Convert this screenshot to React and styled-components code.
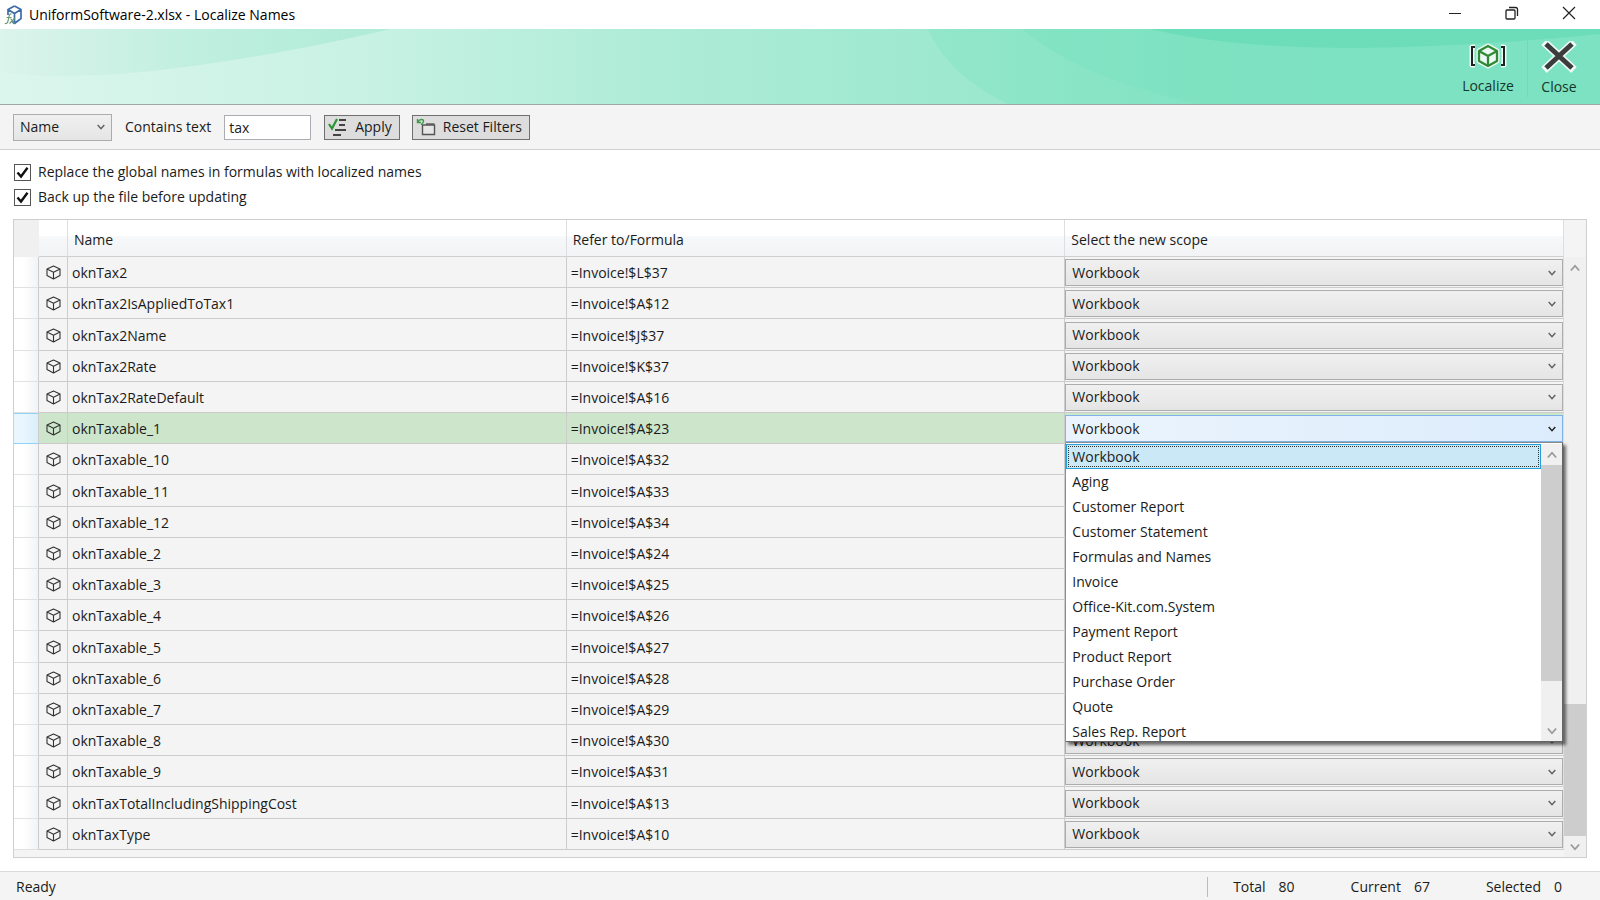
import React, { useState } from 'react'
import styled, { createGlobalStyle, css } from 'styled-components'

const GlobalStyle = createGlobalStyle`
  * {
    box-sizing: border-box;
  }
  body {
    margin: 0;
    background: #fff;
    color: #1b1b1b;
    font-family: "Open Sans", "Noto Sans", sans-serif;
    font-size: 14px;
    line-height: 20px;
  }
  button, input, select {
    font: inherit;
    color: inherit;
    margin: 0;
  }
`;

const Window = styled.div`
  display: flex;
  flex-direction: column;
  height: 100vh;
  overflow: hidden;
`;

const TitleBar = styled.header`
  display: flex;
  align-items: center;
  height: 29px;
  flex: none;
  padding: 0 3px 0 4px;
`;

const Title = styled.h1`
  flex: 1;
  margin: 0 0 0 6px;
  font-size: 14px;
  font-weight: 400;
  color: #000;
`;

const CaptionButton = styled.button`
  display: flex;
  align-items: center;
  justify-content: center;
  width: 57px;
  height: 29px;
  padding: 0 0 4px;
  border: none;
  background: transparent;
`;

const Ribbon = styled.div`
  position: relative;
  display: flex;
  justify-content: flex-end;
  align-items: center;
  height: 76px;
  flex: none;
  padding-right: 10px;
  border-bottom: 1px solid #9fa8a4;
`;

const RibbonArt = styled.svg`
  position: absolute;
  inset: 0;
  width: 100%;
  height: 100%;
`;

const RibbonButton = styled.button`
  position: relative;
  display: flex;
  flex-direction: column;
  align-items: center;
  gap: 4px;
  width: ${({ $wide }) => ($wide ? '78px' : '63px')};
  padding: 4px 0 0;
  border: none;
  background: transparent;
  color: #17362b;
  & + & {
    border-left: 1px solid #9fc4b6;
  }
`;

const FilterBar = styled.form`
  display: flex;
  align-items: center;
  height: 45px;
  flex: none;
  padding: 0 13px;
  background: #f4f4f4;
  border-bottom: 1px solid #d0d0d0;
`;

const FilterLabel = styled.label`
  margin: 0 13px;
`;

const TextBox = styled.input`
  width: 87px;
  height: 25px;
  margin-right: 13px;
  padding: 0 4px;
  border: 1px solid #abadb3;
  background: #fff;
  outline: none;
`;

const ToolButton = styled.button`
  display: flex;
  align-items: center;
  height: 25px;
  margin-right: 12px;
  padding: 0 7px 0 3px;
  gap: 7px;
  border: 1px solid #707070;
  background: #ddd;
  white-space: nowrap;
`;

const SelectBox = styled.div`
  display: grid;
  align-items: center;
  width: ${({ $width }) => $width || '100%'};
  > * {
    grid-area: 1 / 1;
  }
  svg {
    justify-self: end;
    margin-right: 7px;
    pointer-events: none;
  }
`;

const Select = styled.select`
  appearance: none;
  width: 100%;
  height: 27px;
  padding: 0 6px;
  border: 1px solid #acacac;
  border-radius: 0;
  background: linear-gradient(#f0f0f0, #e5e5e5);
  outline: none;
  ${({ $open }) => $open && css`
    border-color: #7eb4ea;
    background: linear-gradient(90deg, #ebf4fc, #dcecfc);
  `}
`;

const Options = styled.div`
  display: flex;
  flex-direction: column;
  gap: 5px;
  flex: none;
  padding: 12px 14px;
`;

const CheckLabel = styled.label`
  display: flex;
  align-items: center;
  gap: 7px;
`;

const CheckBox = styled.span`
  display: grid;
  > * {
    grid-area: 1 / 1;
  }
  input {
    appearance: none;
    width: 17px;
    height: 17px;
    border: 1px solid #555;
    background: #fff;
  }
  svg {
    pointer-events: none;
    visibility: hidden;
  }
  input:checked + svg {
    visibility: visible;
  }
`;

const GridFrame = styled.main`
  display: flex;
  flex: 1;
  min-height: 0;
  margin: 0 13px 13px;
  border: 1px solid #cfcfcf;
  background: #f4f4f4;
`;

const TableArea = styled.div`
  flex: 1;
  padding-bottom: 7px;
`;

const Table = styled.table`
  width: 100%;
  height: 100%;
  table-layout: fixed;
  border-collapse: separate;
  border-spacing: 0;
`;

const MarkCol = styled.col`
  width: 25px;
`;

const IconCol = styled.col`
  width: 29px;
`;

const HeadCell = styled.th`
  height: 37px;
  padding: 3px 6px 0;
  text-align: left;
  font-weight: 400;
  background: linear-gradient(#fff 45%, #f7f8fa 46%, #f1f3f5);
  border-right: 1px solid #dcdfe2;
  border-bottom: 1px solid #cdcfd1;
`;

const CornerCell = styled.th`
  background: #f0f0f0;
`;

const Row = styled.tr`
  background: ${({ $active }) => ($active ? '#cde6cb' : '#f4f4f4')};
`;

const Cell = styled.td`
  padding: 2px 4px 0;
  border-right: 1px solid #ccc;
  border-bottom: 1px solid #ccc;
  svg {
    display: block;
  }
`;

const MarkCell = styled(Cell)`
  background: linear-gradient(90deg, #fff 40%, #f1f3f5);
  border-bottom-color: #dfe1e3;
  ${({ $active }) => $active && css`
    background: linear-gradient(90deg, #e9f6fd 40%, #d9effb);
    border-bottom-color: #8fd3f5;
    box-shadow: inset 0 1px #8fd3f5;
  `}
`;

const IconCell = styled(Cell)`
  padding: 1px 7px 0;
`;

const ScopeCell = styled(Cell)`
  position: relative;
  padding: 1px 0 0;
  border-right-color: #dedede;
`;

const Popup = styled.div`
  position: absolute;
  z-index: 2;
  top: calc(100% - 1px);
  left: 0;
  right: 0;
  display: flex;
  height: 300px;
  padding-top: 1px;
  border: 1px solid #646464;
  background: #fff;
  box-shadow: 3px 3px 3px rgba(0, 0, 0, 0.55);
  clip-path: inset(0 -6px -6px 0);
`;

const ScopeList = styled.ul`
  flex: 1;
  margin: 0;
  padding: 0;
  overflow: hidden;
  list-style: none;
`;

const ScopeOption = styled.li`
  height: 25px;
  padding: 2px 5px 0;
  border: 1px solid transparent;
  ${({ $selected }) => $selected && css`
    background: #cbe8f6;
    border-color: #26a0da;
    outline: 1px dotted #333;
    outline-offset: -3px;
  `}
`;

const ScrollTrack = styled.div`
  display: flex;
  flex-direction: column;
  width: ${({ $width }) => $width};
  flex: none;
  background: #f0f0f0;
`;

const ScrollHead = styled.div`
  height: 37px;
  background: #f4f4f4;
`;

const ScrollButton = styled.button`
  display: flex;
  align-items: center;
  justify-content: center;
  height: 21px;
  flex: none;
  padding: 0;
  border: none;
  background: transparent;
`;

const ScrollSpace = styled.div`
  flex: ${({ $grow }) => $grow} 1 0;
`;

const ScrollThumb = styled(ScrollSpace)`
  background: #cdcdcd;
`;

const StatusBar = styled.footer`
  display: flex;
  align-items: center;
  height: 29px;
  flex: none;
  padding: 1px 38px 0 16px;
  background: #f4f4f4;
  border-top: 1px solid #dadada;
`;

const Status = styled.span`
  flex: 1;
`;

const Counts = styled.div`
  display: flex;
  gap: 56px;
  padding-left: 25px;
  border-left: 1px solid #bbb;
`;

const Count = styled.span`
  display: flex;
  gap: 13px;
`;

const Chevron = ({ up, size = 8, color = '#606060' }) => (
  <svg width={size} height={size} viewBox="0 0 8 8" fill="none" stroke={color} strokeWidth="1.4">
    <path d={up ? 'M0.7 6 4 2.2 7.3 6' : 'M0.7 2 4 5.8 7.3 2'} />
  </svg>
)

const Cube = () => (
  <svg width="15" height="15" viewBox="0 0 15 15" fill="none" stroke="#333" strokeWidth="1.1" strokeLinejoin="round">
    <path d="M7.5 1 14 4v6.6L7.5 14 1 10.6V4zM1 4l6.5 3.2L14 4M7.5 7.2V14" />
  </svg>
)

const AppIcon = () => (
  <svg width="19" height="20" viewBox="0 0 19 20" fill="none" strokeLinejoin="round">
    <path d="M10.5 1 17 4.500v9l-6.500 5-2-1.500M4 10V4.500L10.500 1M4 4.500l6.500 4 6.500-4M10.500 8.500v10" stroke="#3b6cab" strokeWidth="1.7" />
    <path d="M7.500 9C5 8 5 12.500 4 16 3.500 18.300 2.200 19 .8 18.300M2.500 12.500h5M6.500 13.500l4 5M11 13l-5.500 5.500" stroke="#6c9c74" strokeWidth="1.2" />
  </svg>
)

const LocalizeIcon = () => (
  <svg width="42" height="30" viewBox="0 0 42 30" fill="none">
    <g stroke="#fff" strokeWidth="5" strokeLinejoin="round" opacity="0.85">
      <path d="M8 5H5v18h3M34 5h3v18h-3" />
      <path d="M21 4 30 9v10l-9 5-9-5V9z" fill="#fff" />
    </g>
    <path d="M8 5H5v18h3M34 5h3v18h-3" stroke="#222" strokeWidth="2" />
    <path d="M21 4 30 9v10l-9 5-9-5V9zM12 9l9 5 9-5M21 14v10" stroke="#2f8a33" strokeWidth="2.300" strokeLinejoin="round" />
  </svg>
)

const CloseIcon = () => (
  <svg width="36" height="32" viewBox="0 0 36 32" fill="none">
    <path d="M3 1l30 28M33 1L3 29" stroke="#fff" strokeWidth="8" opacity="0.85" />
    <path d="M5 3l26 24M31 3L5 27" stroke="#3c3c3c" strokeWidth="5" />
  </svg>
)

const ApplyIcon = () => (
  <svg width="20" height="20" viewBox="0 0 20 20" fill="none">
    <path d="M11 3h7M11 8h6M7 13h11M5 18h8" stroke="#444" strokeWidth="2" />
    <path d="M1 7l3 4.500L9 2" stroke="#2e9437" strokeWidth="2.200" />
  </svg>
)

const ResetIcon = () => (
  <svg width="20" height="20" viewBox="0 0 20 20" fill="none">
    <path d="M6.500 8h12v9.500h-12z" stroke="#555" strokeWidth="1.4" fill="#e6e6e6" />
    <path d="M10 7h8.500" stroke="#555" strokeWidth="1.400" />
    <path d="M1.500 2v3.500H5M2 5C3 2 8 1.500 7.500 4.500 7.300 6 5.500 6 5.500 8" stroke="#3f9a48" strokeWidth="1.4" />
  </svg>
)

const names = [
  ['oknTax2', 'L$37'],
  ['oknTax2IsAppliedToTax1', 'A$12'],
  ['oknTax2Name', 'J$37'],
  ['oknTax2Rate', 'K$37'],
  ['oknTax2RateDefault', 'A$16'],
  ['oknTaxable_1', 'A$23'],
  ['oknTaxable_10', 'A$32'],
  ['oknTaxable_11', 'A$33'],
  ['oknTaxable_12', 'A$34'],
  ['oknTaxable_2', 'A$24'],
  ['oknTaxable_3', 'A$25'],
  ['oknTaxable_4', 'A$26'],
  ['oknTaxable_5', 'A$27'],
  ['oknTaxable_6', 'A$28'],
  ['oknTaxable_7', 'A$29'],
  ['oknTaxable_8', 'A$30'],
  ['oknTaxable_9', 'A$31'],
  ['oknTaxTotalIncludingShippingCost', 'A$13'],
  ['oknTaxType', 'A$10'],
]

const scopes = [
  'Workbook',
  'Aging',
  'Customer Report',
  'Customer Statement',
  'Formulas and Names',
  'Invoice',
  'Office-Kit.com.System',
  'Payment Report',
  'Product Report',
  'Purchase Order',
  'Quote',
  'Sales Rep. Report',
]

const counts = [['Total', 80], ['Current', 67], ['Selected', 0]]

const Option = ({ children }) => {
  const [checked, setChecked] = useState(true)
  return (
    <CheckLabel>
      <CheckBox>
        <input type="checkbox" checked={checked} onChange={() => setChecked(!checked)} />
        <svg width="17" height="17" viewBox="0 0 17 17" fill="none" stroke="#111" strokeWidth="2.4">
          <path d="M3.5 8.5 7 12.5 13.5 3.8" />
        </svg>
      </CheckBox>
      {children}
    </CheckLabel>
  )
}

const ScopePopup = ({ value, onPick }) => (
  <Popup>
    <ScopeList role="listbox" aria-label="Scopes">
      {scopes.map((scope) => (
        <ScopeOption
          key={scope}
          role="option"
          aria-selected={scope === value}
          $selected={scope === value}
          onClick={() => onPick(scope)}
        >
          {scope}
        </ScopeOption>
      ))}
    </ScopeList>
    <ScrollTrack $width="21px">
      <ScrollButton aria-label="Scroll up"><Chevron up size={10} color="#999" /></ScrollButton>
      <ScrollThumb $grow={216} />
      <ScrollSpace $grow={39} />
      <ScrollButton aria-label="Scroll down"><Chevron size={10} color="#999" /></ScrollButton>
    </ScrollTrack>
  </Popup>
)

const NameRow = ({ name, formula, active }) => {
  const [scope, setScope] = useState('Workbook')
  return (
    <Row $active={active}>
      <MarkCell $active={active} />
      <IconCell><Cube /></IconCell>
      <Cell>{name}</Cell>
      <Cell>{formula}</Cell>
      <ScopeCell>
        <SelectBox>
          <Select
            aria-label={`New scope for ${name}`}
            value={scope}
            $open={active}
            onChange={(e) => setScope(e.target.value)}
          >
            {scopes.map((s) => <option key={s}>{s}</option>)}
          </Select>
          <Chevron color={active ? '#222' : '#606060'} />
        </SelectBox>
        {active && <ScopePopup value={scope} onPick={setScope} />}
      </ScopeCell>
    </Row>
  )
}

const App = () => {
  const [text, setText] = useState('tax')

  return (
    <Window>
      <GlobalStyle />
      <TitleBar>
        <AppIcon />
        <Title>UniformSoftware-2.xlsx - Localize Names</Title>
        <CaptionButton aria-label="Minimize">
          <svg width="14" height="14" stroke="#222"><path d="M1 7.5h12" /></svg>
        </CaptionButton>
        <CaptionButton aria-label="Restore">
          <svg width="14" height="14" fill="none" stroke="#222" strokeWidth="1.3">
            <rect x="1" y="4" width="9" height="9" rx="1" />
            <path d="M4 1.500h6.500a2 2 0 0 1 2 2V10" />
          </svg>
        </CaptionButton>
        <CaptionButton aria-label="Close window">
          <svg width="14" height="14" stroke="#222" strokeWidth="1.2"><path d="M1 1l12 12M13 1L1 13" /></svg>
        </CaptionButton>
      </TitleBar>

      <Ribbon>
        <RibbonArt viewBox="0 0 1600 75" preserveAspectRatio="none">
          <defs>
            <linearGradient id="base">
              <stop offset="0" stopColor="#dcf6ed" />
              <stop offset="0.22" stopColor="#c9f2e4" />
              <stop offset="0.4" stopColor="#afecd8" />
              <stop offset="0.62" stopColor="#9be8ce" />
              <stop offset="1" stopColor="#86e4c4" />
            </linearGradient>
            <linearGradient id="wave">
              <stop offset="0" stopColor="#dcf4eb" />
              <stop offset="0.5" stopColor="#c0efdf" />
              <stop offset="1" stopColor="#aeebd7" />
            </linearGradient>
            <linearGradient id="arc">
              <stop offset="0" stopColor="#93e6ca" />
              <stop offset="0.4" stopColor="#82e3c3" />
              <stop offset="1" stopColor="#80e2c2" />
            </linearGradient>
          </defs>
          <path d="M0 0h1600v75H0z" fill="url(#base)" />
          <path d="M0 0h390C290 24 150 48 65 47 40 47 20 46 0 43z" fill="url(#wave)" />
          <path d="M928 0C940 28 965 54 1008 75H1600V0z" fill="url(#arc)" />
          <path d="M1022 0C1060 32 1120 58 1200 75H1600V0z" fill="#7ae1bf" opacity="0.5" />
          <path d="M1150 0C1200 12 1270 19 1350 19 1440 18 1530 12 1600 5V0z" fill="#68dcb5" opacity="0.8" />
        </RibbonArt>
        <RibbonButton $wide>
          <LocalizeIcon />
          Localize
        </RibbonButton>
        <RibbonButton>
          <CloseIcon />
          Close
        </RibbonButton>
      </Ribbon>

      <FilterBar onSubmit={(e) => e.preventDefault()}>
        <SelectBox $width="99px">
          <Select aria-label="Filter field" defaultValue="Name">
            <option>Name</option>
            <option>Formula</option>
          </Select>
          <Chevron />
        </SelectBox>
        <FilterLabel htmlFor="contains">Contains text</FilterLabel>
        <TextBox id="contains" type="text" value={text} onChange={(e) => setText(e.target.value)} />
        <ToolButton type="submit"><ApplyIcon />Apply</ToolButton>
        <ToolButton type="button" onClick={() => setText('')}><ResetIcon />Reset Filters</ToolButton>
      </FilterBar>

      <Options>
        <Option>Replace the global names in formulas with localized names</Option>
        <Option>Back up the file before updating</Option>
      </Options>

      <GridFrame>
        <TableArea>
          <Table>
            <colgroup>
              <MarkCol />
              <IconCol />
              <col />
              <col />
              <col />
            </colgroup>
            <thead>
              <tr>
                <CornerCell />
                <HeadCell />
                <HeadCell>Name</HeadCell>
                <HeadCell>Refer to/Formula</HeadCell>
                <HeadCell>Select the new scope</HeadCell>
              </tr>
            </thead>
            <tbody>
              {names.map(([name, ref]) => (
                <NameRow
                  key={name}
                  name={name}
                  formula={`=Invoice!$${ref}`}
                  active={name === 'oknTaxable_1'}
                />
              ))}
            </tbody>
          </Table>
        </TableArea>
        <ScrollTrack $width="22px">
          <ScrollHead />
          <ScrollButton aria-label="Scroll up"><Chevron up size={10} color="#999" /></ScrollButton>
          <ScrollSpace $grow={426} />
          <ScrollThumb $grow={132} />
          <ScrollButton aria-label="Scroll down"><Chevron size={10} color="#999" /></ScrollButton>
        </ScrollTrack>
      </GridFrame>

      <StatusBar>
        <Status>Ready</Status>
        <Counts>
          {counts.map(([label, value]) => (
            <Count key={label}>
              <span>{label}</span>
              <span>{value}</span>
            </Count>
          ))}
        </Counts>
      </StatusBar>
    </Window>
  )
}

export default App
